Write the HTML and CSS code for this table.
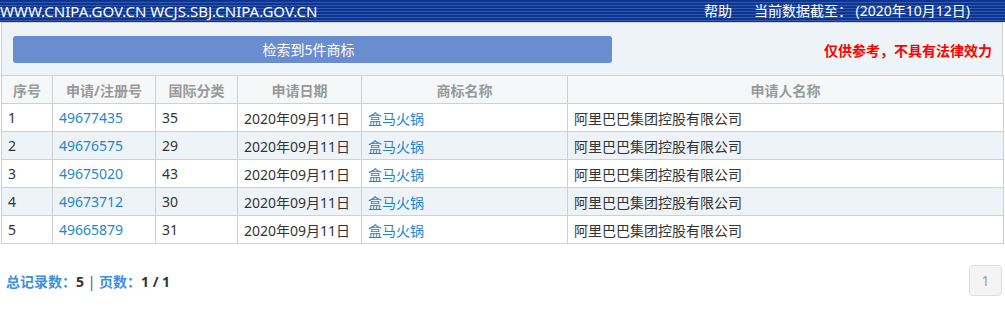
FILE: index.html
```html
<!DOCTYPE html>
<html lang="zh">
<head>
<meta charset="utf-8">
<link rel="stylesheet" href="styles.css">
</head>
<body>
<div class="topbar">
  <span class="site">WWW.CNIPA.GOV.CN WCJS.SBJ.CNIPA.GOV.CN</span>
  <span class="right"><span class="help">帮助</span><span class="date">当前数据截至： (2020年10月12日)</span></span>
</div>
<div class="panel">
  <div class="btn">检索到5件商标</div>
  <div class="warn">仅供参考，不具有法律效力</div>
</div>
<table class="grid">
  <colgroup>
    <col class="c1"><col class="c2"><col class="c3"><col class="c4"><col class="c5"><col class="c6">
  </colgroup>
  <thead>
    <tr><th>序号</th><th>申请/注册号</th><th>国际分类</th><th>申请日期</th><th>商标名称</th><th>申请人名称</th></tr>
  </thead>
  <tbody>
    <tr><td>1</td><td><a>49677435</a></td><td>35</td><td>2020年09月11日</td><td><a>盒马火锅</a></td><td>阿里巴巴集团控股有限公司</td></tr>
    <tr class="alt"><td>2</td><td><a>49676575</a></td><td>29</td><td>2020年09月11日</td><td><a>盒马火锅</a></td><td>阿里巴巴集团控股有限公司</td></tr>
    <tr><td>3</td><td><a>49675020</a></td><td>43</td><td>2020年09月11日</td><td><a>盒马火锅</a></td><td>阿里巴巴集团控股有限公司</td></tr>
    <tr class="alt"><td>4</td><td><a>49673712</a></td><td>30</td><td>2020年09月11日</td><td><a>盒马火锅</a></td><td>阿里巴巴集团控股有限公司</td></tr>
    <tr><td>5</td><td><a>49665879</a></td><td>31</td><td>2020年09月11日</td><td><a>盒马火锅</a></td><td>阿里巴巴集团控股有限公司</td></tr>
  </tbody>
</table>
<div class="footer">
  <div class="stats"><span class="lbl">总记录数：</span><b>5</b> <span class="sep">|</span> <span class="lbl">页数：</span><b>1 / 1</b></div>
  <div class="pager"><span class="page">1</span></div>
</div>
</body>
</html>
```

FILE: styles.css
```css
* { box-sizing: border-box; }
body {
  margin: 0;
  width: 1005px;
  font-family: "Noto Sans", "Noto Sans CJK SC", sans-serif;
  font-size: 14px;
  color: #333;
  background: #fff;
}
.topbar {
  height: 22px;
  display: flex;
  align-items: center;
  justify-content: space-between;
  color: #fff;
  background: repeating-linear-gradient(to bottom, #0c3592 0px, #0c3592 2px, #3358ad 2px, #3358ad 3px);
  font-size: 14px;
  line-height: 22px;
  padding-right: 35px;
}
.site { font-size: 15px; }
.right { display: flex; }
.help { margin-right: 22px; }
.panel {
  margin-left: 1px;
  width: 1002px;
  height: 53px;
  border: 1px solid #d0d0d0;
  border-bottom: none;
  background: #eef3f8;
  display: flex;
  align-items: center;
  justify-content: space-between;
  padding: 0 10px 0 11px;
}
.btn {
  width: 599px;
  height: 27px;
  margin-top: 1px;
  border-radius: 3px;
  background: #6a8dd0;
  color: #fff;
  text-align: center;
  line-height: 27px;
  font-size: 14px;
  padding-right: 8px;
}
.warn {
  color: #f00;
  font-weight: bold;
  font-size: 14px;
  margin-top: 2px;
}
.grid {
  margin-left: 1px;
  width: 1002px;
  border-collapse: collapse;
  table-layout: fixed;
}
.c1 { width: 51px; }
.c2 { width: 103px; }
.c3 { width: 82px; }
.c4 { width: 124px; }
.c5 { width: 206px; }
.c6 { width: 436px; }
.grid th, .grid td {
  border: 1px solid #d0d0d0;
  height: 28px;
  padding: 0 6px;
  white-space: nowrap;
}
.grid th {
  background: #f5f7f8;
  color: #999;
  font-weight: bold;
  text-align: center;
}
.grid td { text-align: left; }
.grid tr.alt td { background: #eef3f8; }
.grid a { color: #1f87c9; }
.footer {
  display: flex;
  justify-content: space-between;
  align-items: center;
  margin-top: 21px;
  padding: 0 3px 0 6px;
}
.stats { font-size: 14px; color: #333; }
.stats .lbl { color: #3d8fdb; font-weight: bold; }
.stats b { color: #333; }
.stats .sep { color: #555; }
.pager { display: flex; }
.page {
  width: 33px;
  height: 31px;
  border: 1px solid #ddd;
  border-radius: 4px;
  background: #f4f4f4;
  color: #999;
  text-align: center;
  line-height: 29px;
  font-size: 14px;
}
```
